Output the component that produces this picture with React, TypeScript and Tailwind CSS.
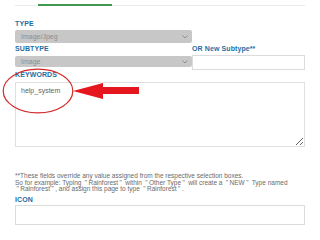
const Chevron = () => (
  <svg width="6" height="4" viewBox="0 0 6 4" className="mr-[4px]">
    <path d="M0.5 0.5 L3 3 L5.5 0.5" fill="none" stroke="#8a8a8a" strokeWidth="0.9" />
  </svg>
);

const Label = ({ children }: { children: React.ReactNode }) => (
  <div className="text-[7px] leading-[8px] font-bold text-[#1f6ea3] tracking-[0.1px]">{children}</div>
);

const FakeSelect = ({ value, h }: { value: string; h: string }) => (
  <div className={`flex items-center justify-between bg-[#c7c7c7] rounded-[2px] overflow-hidden ${h}`}>
    <span className="pl-[6px] text-[7px] leading-[8px] text-[#8e8e8e]">{value}</span>
    <Chevron />
  </div>
);

// quotes in the original render wider than Arial's
const Q = () => <span className="px-[1.5px]">"</span>;

const App = () => {
  return (
    <div className="relative w-[320px] h-[240px] overflow-hidden bg-white font-['Liberation_Sans',Arial,sans-serif]">
      <div className="px-[15px] pt-[4px]">
        <div className="flex items-end h-[2px]">
          <div className="w-[23px] h-px bg-[#ebebeb]" />
          <div className="w-[74px] h-[2px] bg-[#3f9a4f]" />
          <div className="flex-1 h-px bg-[#ebebeb]" />
        </div>

        <div className="mt-[14px] w-[177px]">
          <Label>TYPE</Label>
          <div className="mt-[2px]">
            <FakeSelect value="Image/Jpeg" h="h-[13px]" />
          </div>
        </div>

        <div className="mt-[2px] grid grid-cols-[177px_113px]">
          <div>
            <Label>SUBTYPE</Label>
            <div className="mt-[3px]">
              <FakeSelect value="Image" h="h-[11px]" />
            </div>
          </div>
          <div>
            <Label>OR New Subtype**</Label>
            <div className="mt-[2px] h-[15px] border border-[#dcdcdc] bg-white" />
          </div>
        </div>

        <div className="mt-[1px]">
          <Label>KEYWORDS</Label>
          <textarea
            defaultValue="help_system"
            className="mt-[3px] block w-[290px] h-[65px] border border-[#e0e0e0] px-[5px] py-[3px] text-[7px] leading-[9px] text-[#666] outline-none"
          />
        </div>

        <p className="mt-[26px] text-[6.5px] leading-[6.7px] text-[#6a6a6a]">
          **These fields override any value assigned from the respective selection boxes.
          <br />
          So for example: Typing <Q />Rainforest<Q /> within <Q />Other Type<Q /> will create a <Q />NEW<Q /> Type named{' '}
          <Q />Rainforest<Q />, and assign this page to type <Q />Rainforest<Q />.
        </p>

        <div className="mt-[3px]">
          <Label>ICON</Label>
          <div className="mt-[1px] h-[20px] border border-[#dcdcdc] bg-white" />
        </div>
      </div>

      <svg className="absolute left-[2px] top-[68px]" width="72" height="46" viewBox="0 0 72 46">
        <ellipse cx="36" cy="23" rx="34.8" ry="21.8" fill="none" stroke="#d42a2a" strokeWidth="1.2" />
      </svg>
      <svg className="absolute left-[72px] top-[82px]" width="68" height="18" viewBox="0 0 68 18">
        <polygon points="1,9 31,1 31,5 67,5 67,12 31,12 31,17" fill="#e5161e" />
      </svg>
    </div>
  );
};

export default App;
